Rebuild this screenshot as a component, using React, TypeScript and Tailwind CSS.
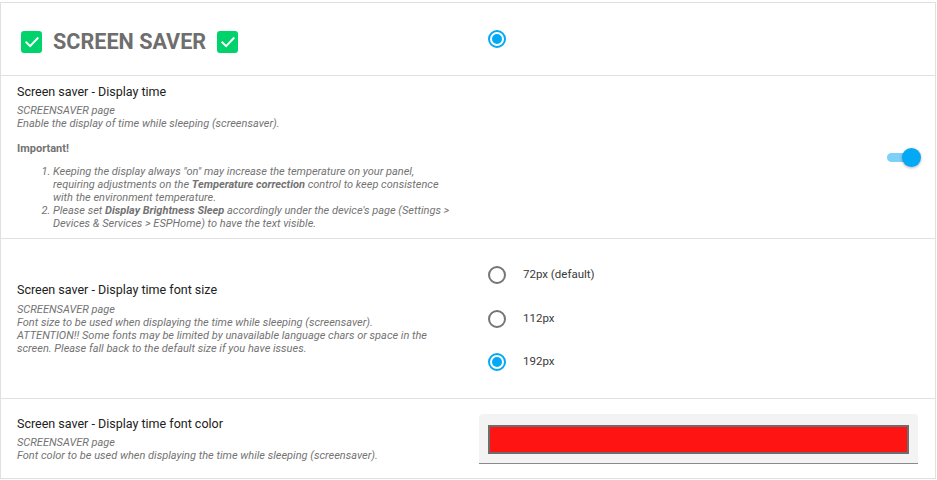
import React from "react";

function GreenCheck() {
  return (
    <div className="w-[21px] h-[22px] rounded-[3px] bg-[#00d36b] flex items-center justify-center">
      <svg width="18" height="18" viewBox="0 0 24 24" fill="none">
        <path d="M4.5 12.5l5 5L19.5 7" stroke="#ffffff" strokeWidth="2.6" strokeLinecap="square" strokeLinejoin="miter" />
      </svg>
    </div>
  );
}

function Radio({ checked }: { checked: boolean }) {
  return checked ? (
    <div className="w-[18px] h-[18px] rounded-full border-2 border-[#03a9f4] flex items-center justify-center">
      <div className="w-[10px] h-[10px] rounded-full bg-[#03a9f4]" />
    </div>
  ) : (
    <div className="w-[18px] h-[18px] rounded-full border-2 border-[#757575]" />
  );
}

function Title({ children }: { children: React.ReactNode }) {
  return <div className="text-[12.5px] leading-[16px] text-[#212121]">{children}</div>;
}

function Sec({ children }: { children: React.ReactNode }) {
  return <div className="text-[11px] leading-[13px] italic text-[#737373]">{children}</div>;
}

export default function App() {
  return (
    <div className="w-[937px] h-[480px] bg-white overflow-hidden" style={{ fontFamily: "Roboto, 'Noto Sans', sans-serif" }}>
      <div className="w-[936px] mt-[2px] border-t border-l border-r border-[#e0e0e0]">
        {/* Header row */}
        <div className="flex h-[73px] border-b border-[#e0e0e0]">
          <div className="w-[478px] flex items-center pl-5 pt-[6px] gap-[11px]">
            <GreenCheck />
            <span className="text-[21.6px] font-bold text-[#6e6e6e] leading-none">SCREEN SAVER</span>
            <GreenCheck />
          </div>
          <div className="flex-1 flex items-center pl-[9px]">
            <Radio checked />
          </div>
        </div>

        {/* Row 2 */}
        <div className="flex h-[163px] border-b border-[#e0e0e0]">
          <div className="w-[478px] pl-4 pr-[26px] pt-[8px]">
            <Title>Screen saver - Display time</Title>
            <div className="mt-[4px]">
              <Sec>SCREENSAVER page</Sec>
              <Sec>Enable the display of time while sleeping (screensaver).</Sec>
            </div>
            <div className="mt-[12px] text-[11px] leading-[13px] font-bold text-[#737373]">Important!</div>
            <ol className="mt-[10px] list-decimal pl-[36px] text-[11px] leading-[13px] italic text-[#737373]">
              <li>
                Keeping the display always "on" may increase the temperature on your panel, requiring adjustments on the{" "}
                <b>Temperature correction</b> control to keep consistence with the environment temperature.
              </li>
              <li>
                Please set <b>Display Brightness Sleep</b> accordingly under the device's page (Settings &gt; Devices &amp; Services &gt; ESPHome) to have the text visible.
              </li>
            </ol>
          </div>
          <div className="flex-1 flex items-center justify-end pr-[14px]">
            <div className="relative w-[34px] h-[19px] flex items-center">
              <div className="w-[26px] h-[9px] rounded-full bg-[#7dd0f8]" />
              <div className="absolute right-0 top-0 w-[19px] h-[19px] rounded-full bg-[#03a9f4] shadow-[0_1px_3px_rgba(0,0,0,0.3)]" />
            </div>
          </div>
        </div>

        {/* Row 3 */}
        <div className="flex h-[160px] border-b border-[#e0e0e0]">
          <div className="w-[478px] pl-4 pr-[26px] flex flex-col justify-center">
            <Title>Screen saver - Display time font size</Title>
            <div className="mt-[5px]">
              <Sec>SCREENSAVER page</Sec>
              <Sec>Font size to be used when displaying the time while sleeping (screensaver).</Sec>
              <Sec>ATTENTION!! Some fonts may be limited by unavailable language chars or space in the screen. Please fall back to the default size if you have issues.</Sec>
            </div>
          </div>
          <div className="flex-1 flex flex-col justify-center gap-[25.5px] pl-[9px]">
            {[
              { l: "72px (default)", c: false },
              { l: "112px", c: false },
              { l: "192px", c: true },
            ].map((o) => (
              <div key={o.l} className="flex items-center gap-[17px]">
                <Radio checked={o.c} />
                <span className="text-[11.5px] text-[#3a3a3a]">{o.l}</span>
              </div>
            ))}
          </div>
        </div>

        {/* Row 4 */}
        <div className="flex h-[80px] border-b border-[#e0e0e0]">
          <div className="w-[478px] pl-4 pr-[26px] flex flex-col justify-center">
            <Title>Screen saver - Display time font color</Title>
            <div className="mt-[4px]">
              <Sec>SCREENSAVER page</Sec>
              <Sec>Font color to be used when displaying the time while sleeping (screensaver).</Sec>
            </div>
          </div>
          <div className="flex-1 flex items-center pr-[17px]">
            <div className="w-full h-[50px] rounded-t-[4px] bg-[#f3f3f3] border-b border-[#8a8a8a] px-[9px] pt-[11px]">
              <div className="h-[29px] bg-[#ff1414] border-2 border-[#6d6d6d]" />
            </div>
          </div>
        </div>
      </div>
    </div>
  );
}
